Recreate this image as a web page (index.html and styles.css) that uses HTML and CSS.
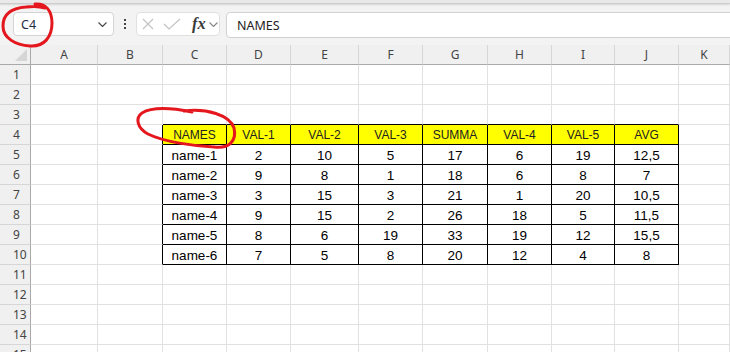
FILE: index.html
```html
<!DOCTYPE html>
<html lang="en">
<head>
    <meta charset="UTF-8">
    <title>Sheet</title>
    <link rel="stylesheet" href="styles.css">
</head>
<body>

<div class="app">
    <div class="ribbon-edge"></div>

    <div class="formula-row">
        <div class="name-box">
            <span>C4</span>
            <svg class="chev" width="9" height="5" viewBox="0 0 9 5"><polyline points="0.5,0.5 4.5,4.5 8.5,0.5"/></svg>
        </div>
        <div class="kebab"><i></i><i></i><i></i></div>
        <div class="fx-box">
            <svg class="ico-x" width="12" height="12" viewBox="0 0 12 12"><path d="M1 1 L11 11 M11 1 L1 11"/></svg>
            <svg class="ico-check" width="18" height="12" viewBox="0 0 18 12"><path d="M1 6 L6 11 L17 1"/></svg>
            <span class="fx">fx</span>
            <svg class="chev small" width="9" height="5" viewBox="0 0 9 5"><polyline points="0.5,0.5 4.5,4.5 8.5,0.5"/></svg>
        </div>
        <div class="formula-input">NAMES</div>
    </div>

    <div class="sheet">
        <!-- column headers -->
        <div class="corner"><span class="tri"></span></div>
        <div class="ch">A</div><div class="ch">B</div><div class="ch">C</div><div class="ch">D</div><div class="ch">E</div><div class="ch">F</div><div class="ch">G</div><div class="ch">H</div><div class="ch">I</div><div class="ch">J</div><div class="ch">K</div>

        <div class="rh">1</div><div class="c"></div><div class="c"></div><div class="c"></div><div class="c"></div><div class="c"></div><div class="c"></div><div class="c"></div><div class="c"></div><div class="c"></div><div class="c"></div><div class="c"></div>
        <div class="rh">2</div><div class="c"></div><div class="c"></div><div class="c"></div><div class="c"></div><div class="c"></div><div class="c"></div><div class="c"></div><div class="c"></div><div class="c"></div><div class="c"></div><div class="c"></div>
        <div class="rh">3</div><div class="c"></div><div class="c"></div><div class="c tt"></div><div class="c tt"></div><div class="c tt"></div><div class="c tt"></div><div class="c tt"></div><div class="c tt"></div><div class="c tt"></div><div class="c tt"></div><div class="c"></div>

        <!-- data table C4:J10 -->
        <div class="rh">4</div><div class="c"></div><div class="c tl"></div>
        <div class="c t th">NAMES</div><div class="c t th">VAL-1</div><div class="c t th">VAL-2</div><div class="c t th">VAL-3</div><div class="c t th">SUMMA</div><div class="c t th">VAL-4</div><div class="c t th">VAL-5</div><div class="c t th">AVG</div><div class="c"></div>

        <div class="rh">5</div><div class="c"></div><div class="c tl"></div>
        <div class="c t">name-1</div><div class="c t">2</div><div class="c t">10</div><div class="c t">5</div><div class="c t">17</div><div class="c t">6</div><div class="c t">19</div><div class="c t">12,5</div><div class="c"></div>

        <div class="rh">6</div><div class="c"></div><div class="c tl"></div>
        <div class="c t">name-2</div><div class="c t">9</div><div class="c t">8</div><div class="c t">1</div><div class="c t">18</div><div class="c t">6</div><div class="c t">8</div><div class="c t">7</div><div class="c"></div>

        <div class="rh">7</div><div class="c"></div><div class="c tl"></div>
        <div class="c t">name-3</div><div class="c t">3</div><div class="c t">15</div><div class="c t">3</div><div class="c t">21</div><div class="c t">1</div><div class="c t">20</div><div class="c t">10,5</div><div class="c"></div>

        <div class="rh">8</div><div class="c"></div><div class="c tl"></div>
        <div class="c t">name-4</div><div class="c t">9</div><div class="c t">15</div><div class="c t">2</div><div class="c t">26</div><div class="c t">18</div><div class="c t">5</div><div class="c t">11,5</div><div class="c"></div>

        <div class="rh">9</div><div class="c"></div><div class="c tl"></div>
        <div class="c t">name-5</div><div class="c t">8</div><div class="c t">6</div><div class="c t">19</div><div class="c t">33</div><div class="c t">19</div><div class="c t">12</div><div class="c t">15,5</div><div class="c"></div>

        <div class="rh">10</div><div class="c"></div><div class="c tl"></div>
        <div class="c t">name-6</div><div class="c t">7</div><div class="c t">5</div><div class="c t">8</div><div class="c t">20</div><div class="c t">12</div><div class="c t">4</div><div class="c t">8</div><div class="c"></div>

        <div class="rh">11</div><div class="c"></div><div class="c"></div><div class="c"></div><div class="c"></div><div class="c"></div><div class="c"></div><div class="c"></div><div class="c"></div><div class="c"></div><div class="c"></div><div class="c"></div>
        <div class="rh">12</div><div class="c"></div><div class="c"></div><div class="c"></div><div class="c"></div><div class="c"></div><div class="c"></div><div class="c"></div><div class="c"></div><div class="c"></div><div class="c"></div><div class="c"></div>
        <div class="rh">13</div><div class="c"></div><div class="c"></div><div class="c"></div><div class="c"></div><div class="c"></div><div class="c"></div><div class="c"></div><div class="c"></div><div class="c"></div><div class="c"></div><div class="c"></div>
        <div class="rh">14</div><div class="c"></div><div class="c"></div><div class="c"></div><div class="c"></div><div class="c"></div><div class="c"></div><div class="c"></div><div class="c"></div><div class="c"></div><div class="c"></div><div class="c"></div>
        <div class="rh">15</div><div class="c"></div><div class="c"></div><div class="c"></div><div class="c"></div><div class="c"></div><div class="c"></div><div class="c"></div><div class="c"></div><div class="c"></div><div class="c"></div><div class="c"></div>
    </div>

    <!-- red hand-drawn marks over the screenshot -->
    <svg class="ink" width="730" height="352" viewBox="0 0 730 352">
        <path d="M35 4 C46 3 52 11 52 23 C52 37 44 47 30 46 C15 45 3 38 3 26 C3 14 12 8 26 7 C33 6 39 6 45 8"/>
        <path d="M184 111 C206 108 230 115 234 128 C237 141 229 149 214 147 C194 146 164 142 148 134 C137 128 135 118 142 113 C152 107 172 108 192 112"/>
    </svg>
</div>

</body>
</html>
```

FILE: styles.css
```css
body {
    margin: 0;
    width: 730px;
    height: 352px;
    overflow: hidden;
    background: #ffffff;
    font-family: "Noto Sans", "Liberation Sans", sans-serif;
}

.app {
    position: relative;
    width: 730px;
    height: 352px;
    background: #f3f3f3;
}

.ribbon-edge {
    height: 3px;
    background: #e9e9e9;
    border-bottom: 1px solid #cdcdcd;
    box-shadow: 0 1px 2px rgba(0, 0, 0, 0.12);
}

.formula-row {
    display: flex;
    align-items: flex-start;
    height: 25px;
    margin: 8px 0 8px 13px;
}

.name-box {
    box-sizing: border-box;
    width: 101px;
    height: 24px;
    display: flex;
    align-items: center;
    justify-content: space-between;
    padding: 0 6px 0 7px;
    background: #fff;
    border: 1px solid #d4d4d4;
    border-radius: 4px;
    font-size: 12.5px;
    color: #1f2a44;
}

.chev polyline {
    fill: none;
    stroke: #4a4a4a;
    stroke-width: 1.2;
}

.chev.small polyline {
    stroke: #8a8a8a;
}

.kebab {
    width: 22px;
    height: 24px;
    display: flex;
    flex-direction: column;
    align-items: center;
    justify-content: center;
    gap: 2px;
}

.kebab i {
    width: 2px;
    height: 2px;
    background: #444;
}

.fx-box {
    box-sizing: border-box;
    width: 84px;
    height: 24px;
    display: flex;
    align-items: center;
    padding-left: 5px;
    background: #fff;
    border: 1px solid #e0e0e0;
    border-radius: 4px;
    margin-right: 6px;
}

.ico-x path, .ico-check path {
    fill: none;
    stroke: #c3c3c3;
    stroke-width: 1.2;
}

.ico-check {
    margin-left: 9px;
}

.fx {
    margin-left: 11px;
    font-family: "Liberation Serif", serif;
    font-style: italic;
    font-weight: bold;
    font-size: 16.5px;
    color: #3a3a3a;
    line-height: 1;
}

.fx-box .chev {
    margin-left: 3px;
}

.formula-input {
    flex: 1;
    box-sizing: border-box;
    height: 26px;
    margin-right: -6px;
    padding-left: 10px;
    display: flex;
    align-items: center;
    background: #fff;
    border: 1px solid #d2d2d2;
    border-radius: 4px 0 0 4px;
    font-size: 12.5px;
    color: #222;
}

.sheet {
    display: grid;
    grid-template-columns: 31px 67px 65px 64px 64px 68px 64px 65px 64px 63px 64px 1fr;
    grid-auto-rows: 20px;
    background: #fff;
}

.sheet > div {
    box-sizing: border-box;
    border-right: 1px solid #e1e1e1;
    border-bottom: 1px solid #e1e1e1;
    display: flex;
    align-items: center;
    justify-content: center;
}

.sheet > .corner {
    position: relative;
    background: #f0f0f0;
    border-right: 1px solid #a9a9a9;
    border-bottom: 1px solid #a9a9a9;
}

.tri {
    position: absolute;
    right: 3px;
    bottom: 3px;
    width: 0;
    height: 0;
    border-left: 12px solid transparent;
    border-bottom: 12px solid #d6d6d6;
}

.sheet > .ch {
    background: #f0f0f0;
    border-right-color: #d6d6d6;
    border-bottom: 1px solid #a9a9a9;
    font-size: 12px;
    color: #444;
}

.sheet > .rh {
    justify-content: flex-start;
    padding-left: 13px;
    background: #f0f0f0;
    border-right: 1px solid #a9a9a9;
    border-bottom-color: #d6d6d6;
    font-size: 12px;
    color: #444;
}

.sheet > .tt {
    border-bottom-color: #000;
}

.sheet > .tl {
    border-right-color: #000;
}

.sheet > .t {
    border-right-color: #000;
    border-bottom-color: #000;
    padding-top: 1px;
    font-family: "Liberation Sans", Arial, sans-serif;
    font-size: 13.5px;
    color: #000;
}

.sheet > .th {
    background: #ffff00;
    font-size: 12px;
    color: #222;
}

.ink {
    position: absolute;
    left: 0;
    top: 0;
    pointer-events: none;
}

.ink path {
    fill: none;
    stroke: #e3171d;
    stroke-width: 3;
    stroke-linecap: round;
    stroke-linejoin: round;
}
```
